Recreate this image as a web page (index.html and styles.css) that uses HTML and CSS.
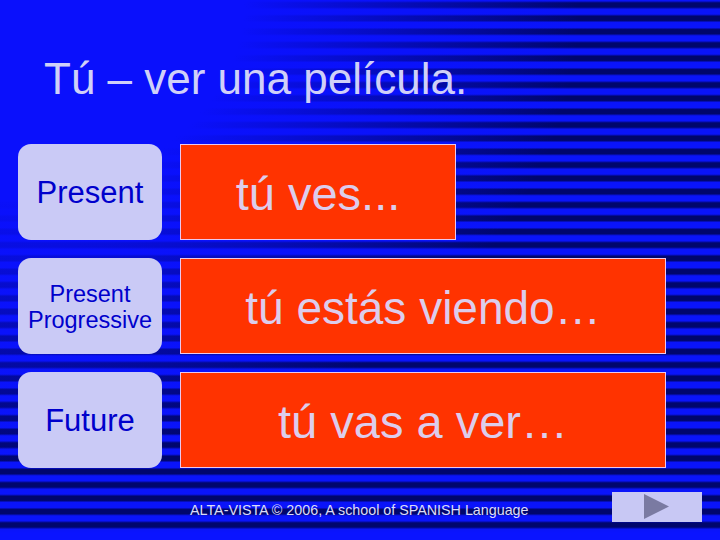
FILE: index.html
```html
<!DOCTYPE html>
<html lang="es">
<head>
<meta charset="utf-8">
<title>Tú – ver una película.</title>
<link rel="stylesheet" href="styles.css">
</head>
<body>
<div class="slide">
  <h1 class="title">Tú – ver una película.</h1>
  <div class="rows">
    <div class="label">Present</div>
    <div class="answer answer-short">tú ves...</div>
    <div class="label label-small">Present<br>Progressive</div>
    <div class="answer">tú estás viendo…</div>
    <div class="label">Future</div>
    <div class="answer answer-big">tú vas a ver…</div>
  </div>
  <div class="footer">
    <span class="credit">ALTA-VISTA © 2006, A school of SPANISH Language</span>
    <div class="next">
      <svg width="90" height="30" viewBox="0 0 90 30"><polygon points="32,2 32,27 57,14.5" fill="#7a7aa2"/></svg>
    </div>
  </div>
</div>
</body>
</html>
```
FILE: styles.css
```css
html, body {
  margin: 0;
  padding: 0;
}
body {
  width: 720px;
  height: 540px;
  overflow: hidden;
  font-family: "Liberation Sans", Arial, sans-serif;
}
.slide {
  width: 720px;
  height: 540px;
  box-sizing: border-box;
  background:
    linear-gradient(to top, #0a14ff 0, #0a14ff 7px, rgba(10, 20, 255, 0) 10px),
    radial-gradient(ellipse 580px 470px at 0 0, #0a10fc 0%, #0a10fc 42%, rgba(10, 16, 252, 0) 100%),
    repeating-linear-gradient(to bottom, #0a14fa 0px, #0a14fa 0.8px, #00066c 2.9px, #00066c 7.1px, #0a14fa 9.2px, #0a14fa 13.333px);
  display: flex;
  flex-direction: column;
}
.title {
  margin: 54px 0 0 44px;
  font-weight: normal;
  font-size: 44px;
  line-height: 50px;
  color: #d0d0f8;
}
.rows {
  margin: 40px 0 0 18px;
  display: grid;
  grid-template-columns: 144px auto;
  grid-auto-rows: 96px;
  column-gap: 18px;
  row-gap: 18px;
}
.label {
  background: #cacaf6;
  border-radius: 13px;
  color: #0000cc;
  font-size: 31px;
  display: flex;
  align-items: center;
  justify-content: center;
  text-align: center;
  padding-top: 2px;
}
.label-small {
  font-size: 23.5px;
  line-height: 26px;
}
.answer {
  width: 486px;
  box-sizing: border-box;
  background: #ff3300;
  border: 1px solid #eac8ee;
  color: #dccdec;
  font-size: 46px;
  display: flex;
  align-items: center;
  justify-content: center;
  padding-top: 3px;
}
.answer-short {
  width: 276px;
  font-size: 47px;
}
.answer-big {
  font-size: 47px;
}
.footer {
  margin-top: 24px;
  display: flex;
  align-items: flex-start;
  padding-left: 190px;
}
.credit {
  margin-top: 10px;
  font-size: 14.3px;
  line-height: 16px;
  color: #dcdcf8;
}
.next {
  margin-left: auto;
  margin-right: 18px;
  width: 90px;
  height: 30px;
  background: #c8c8f4;
}
.next svg {
  display: block;
}
```
